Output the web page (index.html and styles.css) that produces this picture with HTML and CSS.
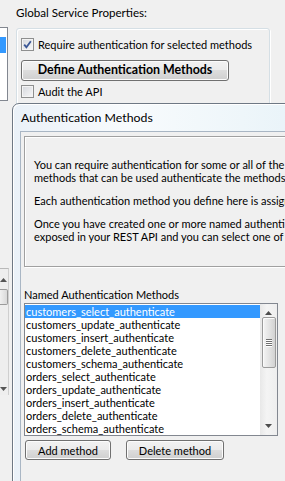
FILE: index.html
```html
<!DOCTYPE html>
<html lang="en">
<head>
    <meta charset="UTF-8">
    <meta name="viewport" content="width=device-width, initial-scale=1.0">
    <title>Authentication Methods</title>
    <link rel="stylesheet" href="styles.css">
</head>
<body>
    <!-- Main window behind the dialog -->
    <div class="backdrop">
        <div class="side">
            <div class="side-list"><div class="side-sel"></div></div>
            <div class="side-scroll">
                <svg class="arrow" width="7" height="4" viewBox="0 0 7 4"><polygon points="0,4 3.5,0 7,4" fill="#555"/></svg>
                <div class="side-thumb"></div>
                <svg class="arrow arrow-down" width="7" height="4" viewBox="0 0 7 4"><polygon points="0,0 7,0 3.5,4" fill="#555"/></svg>
            </div>
        </div>

        <div class="props">
            <div class="props-title">Global Service Properties:</div>
            <div class="group">
                <div class="check-row">
                    <span class="check">
                        <svg width="9" height="9" viewBox="0 0 9 9"><path d="M1.2 4.6 L3.4 7.2 L7.8 1.2" fill="none" stroke="#3a5796" stroke-width="1.8"/></svg>
                    </span>
                    <span>Require authentication for selected methods</span>
                </div>
                <button class="btn btn-define">Define Authentication Methods</button>
                <div class="check-row check-row-last">
                    <span class="check"></span>
                    <span>Audit the API</span>
                </div>
            </div>
        </div>
    </div>

    <!-- Dialog window -->
    <div class="dialog">
        <div class="dialog-title">Authentication Methods</div>
        <div class="dialog-client">
            <div class="info">
                <p>You can require authentication for some or all of the<br>methods that can be used authenticate the methods</p>
                <p>Each authentication method you define here is assigned</p>
                <p>Once you have created one or more named authentication<br>exposed in your REST API and you can select one of</p>
            </div>

            <div class="list-label">Named Authentication Methods</div>
            <div class="listbox">
                <ul class="items">
                    <li class="selected">customers_select_authenticate</li>
                    <li>customers_update_authenticate</li>
                    <li>customers_insert_authenticate</li>
                    <li>customers_delete_authenticate</li>
                    <li>customers_schema_authenticate</li>
                    <li>orders_select_authenticate</li>
                    <li>orders_update_authenticate</li>
                    <li>orders_insert_authenticate</li>
                    <li>orders_delete_authenticate</li>
                    <li>orders_schema_authenticate</li>
                </ul>
                <div class="vscroll">
                    <div class="vscroll-btn">
                        <svg width="7" height="4" viewBox="0 0 7 4"><polygon points="0,4 3.5,0 7,4" fill="#4d4d4d"/></svg>
                    </div>
                    <div class="thumb">
                        <span></span><span></span><span></span><span></span>
                    </div>
                    <div class="vscroll-btn vscroll-btn-down">
                        <svg width="7" height="4" viewBox="0 0 7 4"><polygon points="0,0 7,0 3.5,4" fill="#4d4d4d"/></svg>
                    </div>
                </div>
            </div>

            <div class="dlg-buttons">
                <button class="btn btn-add">Add method</button>
                <button class="btn btn-delete">Delete method</button>
            </div>
        </div>
    </div>
</body>
</html>
```

FILE: styles.css
```css
* {
    margin: 0;
    padding: 0;
    box-sizing: border-box;
}

:root {
    --bg-window: #f0f0f0;
    --border-list: #828790;
    --border-group: #d5dfe5;
    --select-blue: #3399ff;
    --text: #000000;
}

body {
    width: 285px;
    height: 481px;
    overflow: hidden;
    position: relative;
    background-color: var(--bg-window);
    color: var(--text);
    font-family: Lato, "Liberation Sans", sans-serif;
    font-size: 11px;
}

/* Main window */
.backdrop {
    display: flex;
    height: 100%;
}

.side {
    width: 9px;
    display: flex;
    flex-direction: column;
}

.side-list {
    margin-top: 27px;
    width: 8px;
    height: 74px;
    background-color: #ffffff;
    border: 1px solid var(--border-list);
    border-left: none;
    padding-top: 9px;
}

.side-sel {
    width: 6px;
    height: 16px;
    background-color: var(--select-blue);
}

.side-scroll {
    margin-top: 167px;
    width: 9px;
    height: 127px;
    border-top: 1px solid #b9b9b9;
    border-right: 1px solid #cfcfcf;
    background-color: #eeeeee;
    display: flex;
    flex-direction: column;
    align-items: flex-start;
    padding-top: 9px;
}

.arrow {
    display: block;
}

.side-thumb {
    margin-top: 7px;
    width: 8px;
    height: 16px;
    border: 1px solid #9b9b9b;
    border-left: none;
    border-radius: 0 2px 2px 0;
    background: linear-gradient(90deg, #f0f0f0, #d9d9d9);
}

.arrow-down {
    margin-top: auto;
    margin-bottom: 4px;
}

.props {
    margin-left: 7px;
}

.props-title {
    height: 28px;
    padding-top: 5px;
    line-height: 15px;
    font-size: 11.6px;
}

.group {
    width: 254px;
    height: 190px;
    border: 1px solid var(--border-group);
    border-radius: 3px;
    box-shadow: inset 1px 1px 0 #ffffff, 1px 1px 0 #ffffff;
    padding: 9px 0 0 4px;
    display: flex;
    flex-direction: column;
    align-items: flex-start;
}

.check-row {
    height: 13px;
    line-height: 13px;
    display: flex;
    align-items: center;
    gap: 4px;
}

.check-row-last {
    margin-top: 4px;
}

.check {
    width: 13px;
    height: 13px;
    border: 1px solid #8e8f8f;
    background: linear-gradient(135deg, #d4d7dc, #f8f8f8);
    box-shadow: inset 0 0 0 1px #f4f4f4;
    display: flex;
    align-items: center;
    justify-content: center;
}

.btn {
    font-family: inherit;
    font-size: 11px;
    color: var(--text);
    border: 1px solid #707070;
    border-radius: 3px;
    background: linear-gradient(#f2f2f2 0%, #ebebeb 50%, #dddddd 50%, #cfcfcf 100%);
    box-shadow: inset 0 0 0 1px #fcfcfc;
    line-height: 1;
}

.btn-define {
    margin-top: 9px;
    width: 208px;
    height: 21px;
    font-weight: bold;
    font-size: 12.4px;
}

/* Dialog */
.dialog {
    position: absolute;
    left: 12px;
    top: 103px;
    width: 330px;
    height: 400px;
    border: 1px solid #6e7884;
    border-radius: 7px 7px 0 0;
    background: linear-gradient(90deg, #eaf1f8, #f8fbfd 35%, #eef6fa 70%, #e4f1f8);
    box-shadow: inset 1px 1px 0 #ffffff;
    padding-left: 7px;
    display: flex;
    flex-direction: column;
}

.dialog-title {
    height: 27px;
    line-height: 27px;
    padding-left: 1px;
    font-size: 12.3px;
}

.dialog-client {
    flex: 1;
    background-color: var(--bg-window);
    border-top: 1px solid #a9b6c4;
    border-left: 1px solid #a9b6c4;
    padding: 4px 0 0 3px;
}

.info {
    width: 310px;
    height: 131px;
    border: 1px solid #a0a0a0;
    box-shadow: inset 1px 1px 0 #ffffff, 1px 1px 0 #ffffff;
    padding: 21px 0 0 9px;
    line-height: 13px;
    white-space: nowrap;
    overflow: hidden;
}

.info p {
    margin-bottom: 10px;
}

.list-label {
    margin-top: 21px;
    line-height: 13px;
}

.listbox {
    margin-top: 2px;
    width: 254px;
    height: 133px;
    background-color: #ffffff;
    border: 1px solid var(--border-list);
    display: flex;
}

.items {
    list-style: none;
    flex: 1;
    padding-top: 1px;
}

.items li {
    height: 13px;
    line-height: 13px;
    padding-left: 1px;
    white-space: nowrap;
}

.items li.selected {
    background-color: var(--select-blue);
    color: #ffffff;
}

.vscroll {
    width: 17px;
    background: linear-gradient(90deg, #e8e8e8, #f4f4f4 40%, #eeeeee);
    display: flex;
    flex-direction: column;
    align-items: center;
}

.vscroll-btn {
    height: 13px;
    width: 100%;
    display: flex;
    align-items: flex-end;
    justify-content: center;
    padding-bottom: 2px;
}

.vscroll-btn-down {
    margin-top: auto;
    align-items: flex-start;
    padding-bottom: 0;
    padding-top: 2px;
}

.thumb {
    width: 14px;
    height: 51px;
    margin-left: 1px;
    border: 1px solid #9b9b9b;
    border-radius: 2px;
    background: linear-gradient(90deg, #f4f4f4, #e4e4e4 50%, #d2d2d2);
    box-shadow: inset 1px 1px 0 #fbfbfb;
    display: flex;
    flex-direction: column;
    align-items: center;
    justify-content: center;
    gap: 1px;
}

.thumb span {
    width: 6px;
    height: 1px;
    background-color: #6f6f6f;
    box-shadow: 0 1px 0 #ffffff;
}

.dlg-buttons {
    display: flex;
    gap: 15px;
    margin-top: 4px;
    padding-left: 1px;
}

.btn-add {
    width: 86px;
    height: 20px;
}

.btn-delete {
    width: 98px;
    height: 20px;
}
```
